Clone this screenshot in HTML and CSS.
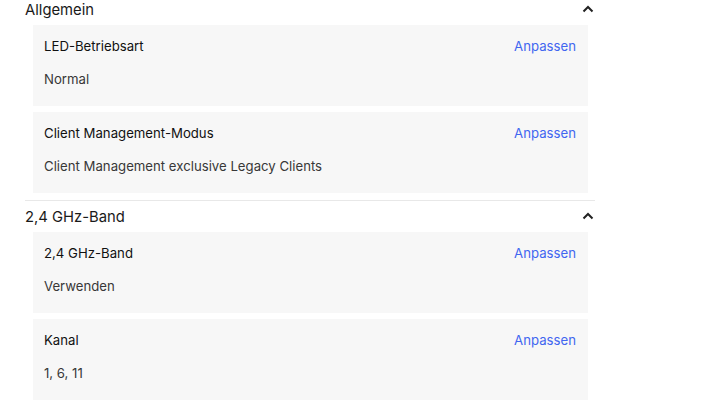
FILE: index.html
```html
<!DOCTYPE html>
<html lang="de">
<head>
<meta charset="utf-8">
<link rel="stylesheet" href="styles.css">
</head>
<body>
<div class="page">
  <section class="section">
    <div class="section-head">
      <span class="section-title">Allgemein</span>
      <svg class="chev" width="12" height="8" viewBox="0 0 12 8"><path d="M1.5 6.5 L6 2 L10.5 6.5" fill="none" stroke="#222" stroke-width="2"/></svg>
    </div>
    <div class="cards">
      <div class="card">
        <div class="card-row"><span class="card-title">LED-Betriebsart</span><a class="link">Anpassen</a></div>
        <div class="card-value">Normal</div>
      </div>
      <div class="card">
        <div class="card-row"><span class="card-title">Client Management-Modus</span><a class="link">Anpassen</a></div>
        <div class="card-value">Client Management exclusive Legacy Clients</div>
      </div>
    </div>
  </section>
  <section class="section">
    <div class="section-head">
      <span class="section-title">2,4 GHz-Band</span>
      <svg class="chev" width="12" height="8" viewBox="0 0 12 8"><path d="M1.5 6.5 L6 2 L10.5 6.5" fill="none" stroke="#222" stroke-width="2"/></svg>
    </div>
    <div class="cards">
      <div class="card">
        <div class="card-row"><span class="card-title">2,4 GHz-Band</span><a class="link">Anpassen</a></div>
        <div class="card-value">Verwenden</div>
      </div>
      <div class="card">
        <div class="card-row"><span class="card-title">Kanal</span><a class="link">Anpassen</a></div>
        <div class="card-value">1, 6, 11</div>
      </div>
    </div>
  </section>
</div>
</body>
</html>
```
FILE: styles.css
```css
html, body {
  margin: 0;
  padding: 0;
  background: #ffffff;
}
body {
  font-family: Inter, "Noto Sans", sans-serif;
  color: #222;
  overflow: hidden;
}
.page {
  width: 570px;
  margin-left: 25px;
  margin-top: -6px;
}
.section {
  border-bottom: 1px solid #e8e8e8;
  padding-bottom: 7px;
}
.section-head {
  height: 31px;
  display: flex;
  align-items: center;
  justify-content: space-between;
}
.section-title {
  font-size: 14.8px;
  line-height: 20px;
  color: #1a1a1a;
  margin-top: 1px;
}
.chev {
  margin-right: 1px;
  margin-top: -2px;
}
.cards {
  display: flex;
  flex-direction: column;
  gap: 6px;
  padding: 0 7px 0 8px;
}
.card {
  height: 81px;
  box-sizing: border-box;
  background: #f7f7f7;
  padding: 11px 12px 0 11px;
}
.card-row {
  display: flex;
  justify-content: space-between;
  align-items: center;
  height: 20px;
}
.card-title {
  font-size: 13.2px;
  line-height: 20px;
  color: #111;
}
.link {
  font-size: 13.2px;
  line-height: 20px;
  color: #4166f0;
  cursor: pointer;
}
.card-value {
  margin-top: 13px;
  font-size: 13.2px;
  line-height: 20px;
  color: #383838;
}
```
